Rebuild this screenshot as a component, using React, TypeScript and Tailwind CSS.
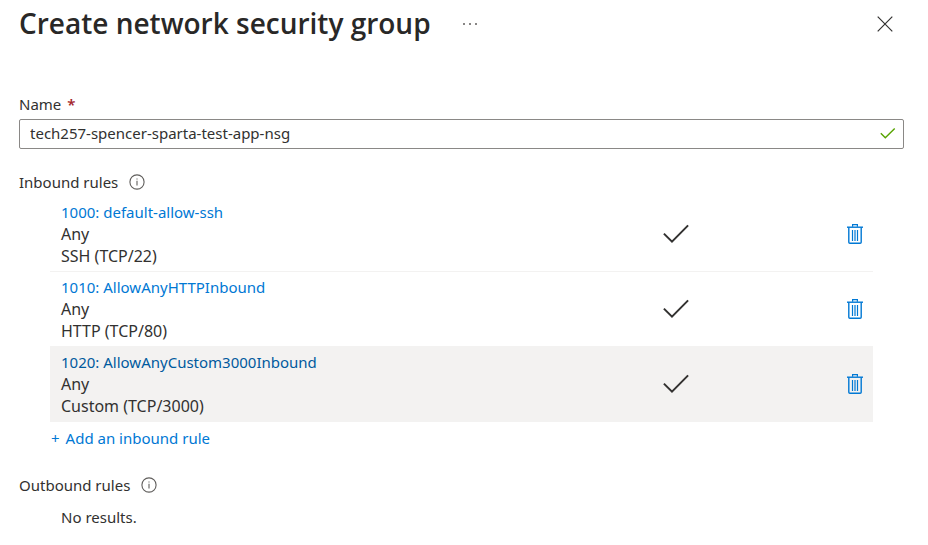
import { useState } from "react";

type Rule = { priority: number; name: string; source: string; service: string };

const inboundRules: Rule[] = [
  { priority: 1000, name: "default-allow-ssh", source: "Any", service: "SSH (TCP/22)" },
  { priority: 1010, name: "AllowAnyHTTPInbound", source: "Any", service: "HTTP (TCP/80)" },
  { priority: 1020, name: "AllowAnyCustom3000Inbound", source: "Any", service: "Custom (TCP/3000)" },
];

function CloseIcon() {
  return (
    <svg viewBox="0 0 16 16" className="size-4" fill="none" stroke="#323130" strokeWidth="1.2" aria-hidden="true">
      <path d="M0.7 0.7 15.3 15.3M15.3 0.7 0.7 15.3" />
    </svg>
  );
}

function InfoIcon() {
  return (
    <svg viewBox="0 0 16 16" className="size-4" fill="none" stroke="#605e5c" aria-hidden="true">
      <circle cx="8" cy="8" r="7.1" strokeWidth="1.1" />
      <path d="M8 6.8V11.4M8 4.5V5.6" strokeWidth="1.1" />
    </svg>
  );
}

function AllowIcon() {
  return (
    <svg viewBox="0 0 26 20" className="h-5 w-[26px]" fill="none" stroke="#323130" strokeWidth="2" role="img" aria-label="Allow">
      <path d="M0.9 9.6 9 17.6 25.1 1.4" />
    </svg>
  );
}

function ValidIcon() {
  return (
    <svg viewBox="0 0 16 12" className="h-3 w-4" fill="none" stroke="#57a300" strokeWidth="1.4" aria-hidden="true">
      <path d="M0.8 5.3 5.3 9.7 14.7 0.5" />
    </svg>
  );
}

function TrashIcon() {
  return (
    <svg viewBox="0 0 16 20" className="h-5 w-4" fill="none" stroke="#0078d4" aria-hidden="true">
      <path d="M5.6 2.8V0.7H10.4V2.8" strokeWidth="1.2" />
      <path d="M0 3.2H16" strokeWidth="1.4" />
      <path d="M1.8 3.2V18.2Q1.8 19.3 2.9 19.3H13.1Q14.2 19.3 14.2 18.2V3.2" strokeWidth="1.4" />
      <path d="M5.5 6V17M8 6V17M10.5 6V17" strokeWidth="1.2" />
    </svg>
  );
}

function SectionHeading({ title }: { title: string }) {
  return (
    <div className="flex h-5 items-center gap-[11px]">
      <h2>{title}</h2>
      <button type="button" aria-label={"About " + title.toLowerCase()}>
        <InfoIcon />
      </button>
    </div>
  );
}

export default function App() {
  const [name, setName] = useState("tech257-spencer-sparta-test-app-nsg");

  return (
    <main className="bg-white pr-6 pl-[19px] font-['Noto_Sans','Open_Sans',sans-serif] text-[15px] leading-5 text-[#323130]">
      <header className="flex h-12 items-center">
        <h1 className="pb-0.5 font-['Open_Sans','Noto_Sans',sans-serif] text-[28px] leading-9 font-semibold text-[#292827]">
          Create network security group
        </h1>
        <button type="button" aria-label="More options" className="ml-8 flex gap-1">
          <span className="size-0.5 rounded-full bg-[#605e5c]" />
          <span className="size-0.5 rounded-full bg-[#605e5c]" />
          <span className="size-0.5 rounded-full bg-[#605e5c]" />
        </button>
        <button type="button" aria-label="Close" className="mr-[11px] ml-auto">
          <CloseIcon />
        </button>
      </header>

      <div className="pt-[46px]">
        <label htmlFor="nsg-name" className="flex gap-1.5">
          Name <span className="font-semibold text-[#a4262c]">*</span>
        </label>
        <div className="mt-[5px] flex h-[30px] items-center rounded-xs border border-[#8a8886] pr-[7px] pl-2.5">
          <input
            id="nsg-name"
            required
            value={name}
            onChange={(e) => setName(e.target.value)}
            className="min-w-0 flex-1 bg-transparent pb-0.5 outline-none"
          />
          <ValidIcon />
        </div>
      </div>

      <section className="mt-[23px]">
        <SectionHeading title="Inbound rules" />
        <div className="mx-[31px] mt-1">
          <table className="w-full table-fixed">
            <tbody>
              {inboundRules.map((rule) => (
                <tr
                  key={rule.priority}
                  className="h-[75px] border-t border-[#f3f2f1] first:border-transparent last:bg-[#f3f2f1]"
                >
                  <td className="w-[73%] py-0 pl-[11px]">
                    <a
                      href="#rule"
                      className={rule.priority === 1020 ? "mb-px block text-[#005a9e]" : "mb-px block text-[#0078d4]"}
                    >
                      {rule.priority}: {rule.name}
                    </a>
                    <div className="text-base leading-[22px]">{rule.source}</div>
                    <div className="text-base leading-[22px]">{rule.service}</div>
                  </td>
                  <td className="pl-3">
                    <AllowIcon />
                  </td>
                  <td className="w-[10%] pr-2.5">
                    <button type="button" aria-label={"Delete " + rule.name} className="ml-auto block">
                      <TrashIcon />
                    </button>
                  </td>
                </tr>
              ))}
            </tbody>
          </table>
          <button type="button" className="mt-1.5 flex gap-1.5 pl-px text-[#0078d4]">
            <span>+</span>
            <span>Add an inbound rule</span>
          </button>
        </div>
      </section>

      <section className="mt-[27px] pb-4">
        <SectionHeading title="Outbound rules" />
        <p className="mt-3 ml-[42px]">No results.</p>
      </section>
    </main>
  );
}
